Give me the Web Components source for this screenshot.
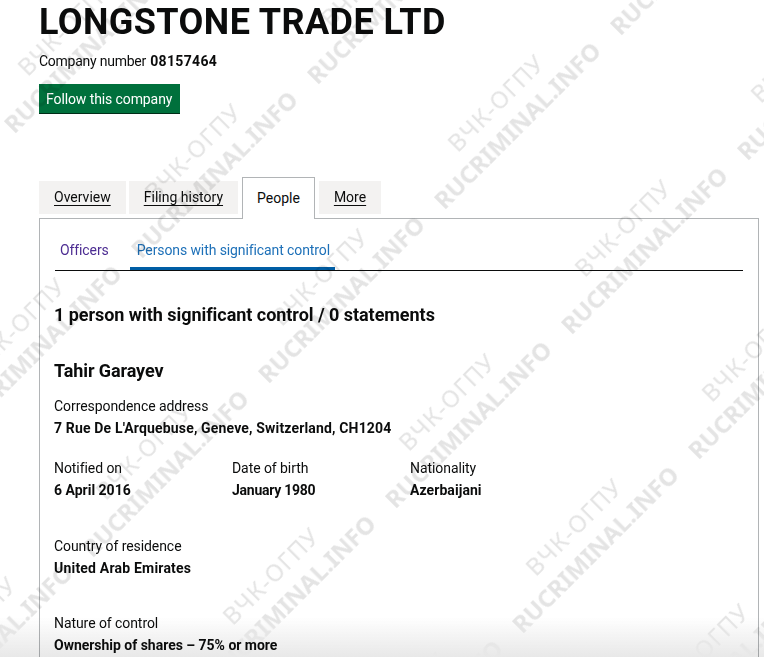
<!DOCTYPE html>
<html><head><meta charset="utf-8"><style>
html,body{margin:0;padding:0;background:#fff;overflow:hidden}
body{width:764px;height:657px;position:relative;font-family:Roboto,"Liberation Sans",sans-serif;color:#0b0c0c}
</style></head><body>
<ch-page></ch-page>
<script>
function def(name, css, html){customElements.define(name,class extends HTMLElement{constructor(){super();this.attachShadow({mode:'open'}).innerHTML='<style>'+css+'</style>'+html}})}
def('ch-button',`:host{display:inline-block;background:#00703c;color:#fff;font-size:14px;letter-spacing:-.1px;line-height:20px;padding:5px 8px 4px 7px;box-shadow:0 1px 0 #002d18;height:29px;box-sizing:border-box}`,`<slot></slot>`);
def('ch-tab',`:host{display:block;background:#f3f2f1;font-size:14px;line-height:20px;padding:6px 15px;height:33px;box-sizing:border-box;margin-top:4px}
:host([active]){background:#fff;border:1px solid #b1b4b6;border-bottom:0;height:42px;margin:0 1px -1px 1px;padding:10px 14px 0;position:relative;z-index:1}
span{text-decoration:underline;text-underline-offset:3px;text-decoration-thickness:1px}:host([active]) span{text-decoration:none}`,`<span><slot></slot></span>`);
def('ch-subtab',`:host{display:block;font-size:14px;letter-spacing:-.1px;line-height:20px;padding:7px 5px 9px;height:37px;box-sizing:border-box;color:#4c2c92}
:host([active]){color:#1d70b8;border-bottom:3px solid #005ea5;padding:7px 5px 9px 7px}`,`<slot></slot>`);
def('ch-field',`:host{display:block;font-size:14px;line-height:20px;letter-spacing:-.07px}
b{display:block;font-weight:700;margin-top:2px;letter-spacing:var(--vls,.16px)}`,`<div><slot name="k"></slot></div><b><slot name="v"></slot></b>`);
def('ch-watermarks',`:host{position:absolute;inset:0;pointer-events:none;overflow:hidden;mix-blend-mode:multiply}
.s{position:absolute;width:0;height:0}
.r{position:absolute;left:-126px;top:-47px;width:240px;transform:rotate(-45deg);color:#e4e4e4;font-family:"Noto Sans",sans-serif;line-height:1;white-space:nowrap;filter:blur(.4px)}
.a{font-size:24px;font-weight:400;padding-left:50px;letter-spacing:1px}
.b{font-size:24px;font-weight:700;margin-top:7px}
.f{position:absolute;left:0;right:0;bottom:0;height:40px;background:linear-gradient(to bottom,rgba(232,232,232,0),rgba(232,232,232,1))}`,`<div id="w"></div><div class="f"></div>`);
def('ch-page',`:host{display:block;padding:0 5px 0 39px;height:657px;overflow:hidden}
h1{font-size:36px;line-height:44px;margin:0;font-weight:700;letter-spacing:.42px;color:#0b0c0c}
.num{font-size:14px;line-height:20px;margin:7px 0 13px;letter-spacing:-.25px}
.num b{letter-spacing:.35px;margin-left:1px}
.tabs{display:flex;gap:3px;margin-top:64px;align-items:flex-start}
.panel{border:1px solid #b1b4b6;padding:14px 15px 15px 14px;height:600px;box-sizing:border-box}
.sub{display:flex;gap:16px;border-bottom:1px solid #0b0c0c;height:37px;margin-left:1px}
h2{font-size:18px;line-height:24px;margin:32px 0 0;font-weight:700;letter-spacing:-.04px}
h3{font-size:18px;line-height:24px;margin:32px 0 0;font-weight:700;letter-spacing:-.1px}
.f1{margin-top:13px}
.row{display:flex;margin-top:20px}.row ch-field{width:178px}
.c1{margin-top:36px;--vls:.2px}.c2{margin-top:35px;--vls:-.02px}
.d1{--vls:0}.d2{--vls:-.25px}.d3{--vls:.06px}`,`
<h1>LONGSTONE TRADE LTD</h1>
<p class="num">Company number <b>08157464</b></p>
<ch-button>Follow this company</ch-button>
<div class="tabs"><ch-tab>Overview</ch-tab><ch-tab>Filing history</ch-tab><ch-tab active>People</ch-tab><ch-tab>More</ch-tab></div>
<div class="panel">
<div class="sub"><ch-subtab>Officers</ch-subtab><ch-subtab active>Persons with significant control</ch-subtab></div>
<h2>1 person with significant control / 0 statements</h2>
<h3>Tahir Garayev</h3>
<ch-field class="f1"><span slot="k">Correspondence address</span><span slot="v">7 Rue De L'Arquebuse, Geneve, Switzerland, CH1204</span></ch-field>
<div class="row"><ch-field class="d1"><span slot="k">Notified on</span><span slot="v">6 April 2016</span></ch-field><ch-field class="d2"><span slot="k">Date of birth</span><span slot="v">January 1980</span></ch-field><ch-field class="d3"><span slot="k">Nationality</span><span slot="v">Azerbaijani</span></ch-field></div>
<ch-field class="c1"><span slot="k">Country of residence</span><span slot="v">United Arab Emirates</span></ch-field>
<ch-field class="c2"><span slot="k">Nature of control</span><span slot="v">Ownership of shares – 75% or more</span></ch-field>
</div><ch-watermarks></ch-watermarks>`);
const wm=document.querySelector('ch-page').shadowRoot.querySelector('ch-watermarks').shadowRoot.getElementById('w');
let h='';
for(let i=-6;i<7;i++)for(let j=-6;j<7;j++){const x=518+127*i-176*j,y=128+125*i+174*j;if(x<-90||x>854||y<-90||y>747)continue;
h+=`<div class="s" style="left:${x}px;top:${y}px"><div class="r"><div class="a">ВЧК-ОГПУ</div><div class="b">RUCRIMINAL.INFO</div></div></div>`}
wm.innerHTML=h;
</script></body></html>
